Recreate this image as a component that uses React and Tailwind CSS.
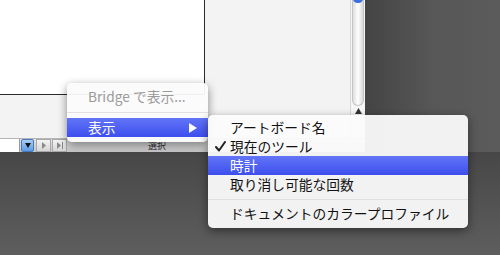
import React from "react";

const font = { fontFamily: '"Noto Sans CJK JP", "Noto Sans", sans-serif' };

function Tri({ className }) {
  return (
    <svg width="8" height="10" viewBox="0 0 8 10" className={className}>
      <path d="M0 0 L8 5 L0 10 Z" fill="currentColor" />
    </svg>
  );
}

export default function App() {
  return (
    <div
      className="relative w-[500px] h-[255px] overflow-hidden bg-[#5a5a5a] flex flex-col"
      style={font}
    >
      {/* top: window + dark desktop */}
      <div className="flex h-[152px]">
        <div className="w-[365px] flex flex-col bg-[#f3f3f3]">
          <div className="flex h-[138px]">
            {/* pasteboard */}
            <div className="flex-1 border-r border-[#d8d8d8]">
              <div className="w-[205px] h-[95px] bg-white border-r border-b border-[#2a2a2a]" />
            </div>
            {/* vertical scrollbar */}
            <div className="w-[14px] flex flex-col items-center bg-[#f6f6f6]">
              <div className="w-[12px] h-[106px] rounded-b-[6px] bg-gradient-to-r from-[#dedede] via-[#ffffff] to-[#d8d8d8] border-x border-b border-[#c4c4c4] relative">
                <div className="absolute top-[-6px] left-0 w-[10px] h-[9px] rounded-full bg-[#3f6fe0]" />
              </div>
              <svg width="7" height="6" viewBox="0 0 7 6" className="mt-[2px] text-[#333]">
                <path d="M3.5 0 L7 6 L0 6 Z" fill="currentColor" />
              </svg>
            </div>
          </div>
          {/* status bar */}
          <div className="h-[14px] flex items-stretch bg-gradient-to-b from-[#e2e2e2] to-[#c6c6c6] border-t border-[#b5b5b5]">
            <div className="w-[20px] bg-white border-r border-[#9a9a9a]" />
            <div className="w-[13px] ml-[1px] rounded-[2px] bg-gradient-to-b from-[#a8ccf5] to-[#5a9be6] border border-[#4a7ab8] flex items-center justify-center">
              <svg width="6" height="5" viewBox="0 0 6 5"><path d="M0 0 L6 0 L3 5 Z" fill="#111" /></svg>
            </div>
            <div className="w-[15px] ml-[2px] bg-gradient-to-b from-[#f4f4f4] to-[#d6d6d6] border border-[#a9a9a9] flex items-center justify-center">
              <svg width="4" height="7" viewBox="0 0 4 7"><path d="M0 0 L4 3.5 L0 7 Z" fill="#8a8a8a" /></svg>
            </div>
            <div className="w-[15px] ml-[1px] bg-gradient-to-b from-[#f4f4f4] to-[#d6d6d6] border border-[#a9a9a9] flex items-center justify-center gap-[1px]">
              <svg width="4" height="7" viewBox="0 0 4 7"><path d="M0 0 L4 3.5 L0 7 Z" fill="#8a8a8a" /></svg>
              <div className="w-[1px] h-[7px] bg-[#8a8a8a]" />
            </div>
            <div className="flex-1 flex items-center pl-[81px] text-[9px] leading-none text-[#333]">選択</div>
          </div>
        </div>
        {/* right desktop with shadow */}
        <div className="flex-1 bg-gradient-to-r from-[#444] via-[#575757] to-[#5b5b5b]" />
      </div>
      {/* bottom desktop */}
      <div className="flex-1 bg-gradient-to-b from-[#474747] to-[#5e5e5e]" />

      {/* context menu */}
      <div className="absolute left-[67px] top-[83px] w-[141px] pt-[4px] pb-[5px] rounded-[5px] bg-[#fbfbfb]/95 shadow-[0_3px_10px_rgba(0,0,0,0.45)] text-[13.75px] leading-none">
        <div className="h-[19px] flex items-center pl-[21px] text-[#9a9a9a] whitespace-nowrap">Bridge で表示...</div>
        <div className="h-[12px] flex items-center">
          <div className="w-full h-[1px] bg-[#e0e0e0]" />
        </div>
        <div className="h-[19px] flex items-center pl-[21px] pr-[11px] text-white bg-gradient-to-b from-[#6374f6] to-[#3d4eee]">
          <span className="flex-1">表示</span>
          <Tri className="text-white" />
        </div>
      </div>

      {/* submenu */}
      <div className="absolute left-[208px] top-[115px] w-[260px] pt-[3px] pb-[5px] rounded-[5px] bg-[#fbfbfb]/95 shadow-[0_3px_10px_rgba(0,0,0,0.45)] text-[13.75px] leading-none text-[#111]">
        <div className="h-[19px] flex items-center pl-[22px]">アートボード名</div>
        <div className="h-[19px] flex items-center pl-[7px]">
          <svg width="11" height="11" viewBox="0 0 11 11" className="mr-[4px] text-[#222]">
            <path d="M1 6 L4 9.5 L10 1" fill="none" stroke="currentColor" strokeWidth="2" strokeLinecap="round" strokeLinejoin="round" />
          </svg>
          <span>現在のツール</span>
        </div>
        <div className="h-[19px] flex items-center pl-[22px] text-white bg-gradient-to-b from-[#6374f6] to-[#3d4eee]">時計</div>
        <div className="h-[19px] flex items-center pl-[22px]">取り消し可能な回数</div>
        <div className="h-[10px] flex items-center">
          <div className="w-full h-[1px] bg-[#e0e0e0]" />
        </div>
        <div className="h-[19px] flex items-center pl-[22px]">ドキュメントのカラープロファイル</div>
      </div>
    </div>
  );
}
